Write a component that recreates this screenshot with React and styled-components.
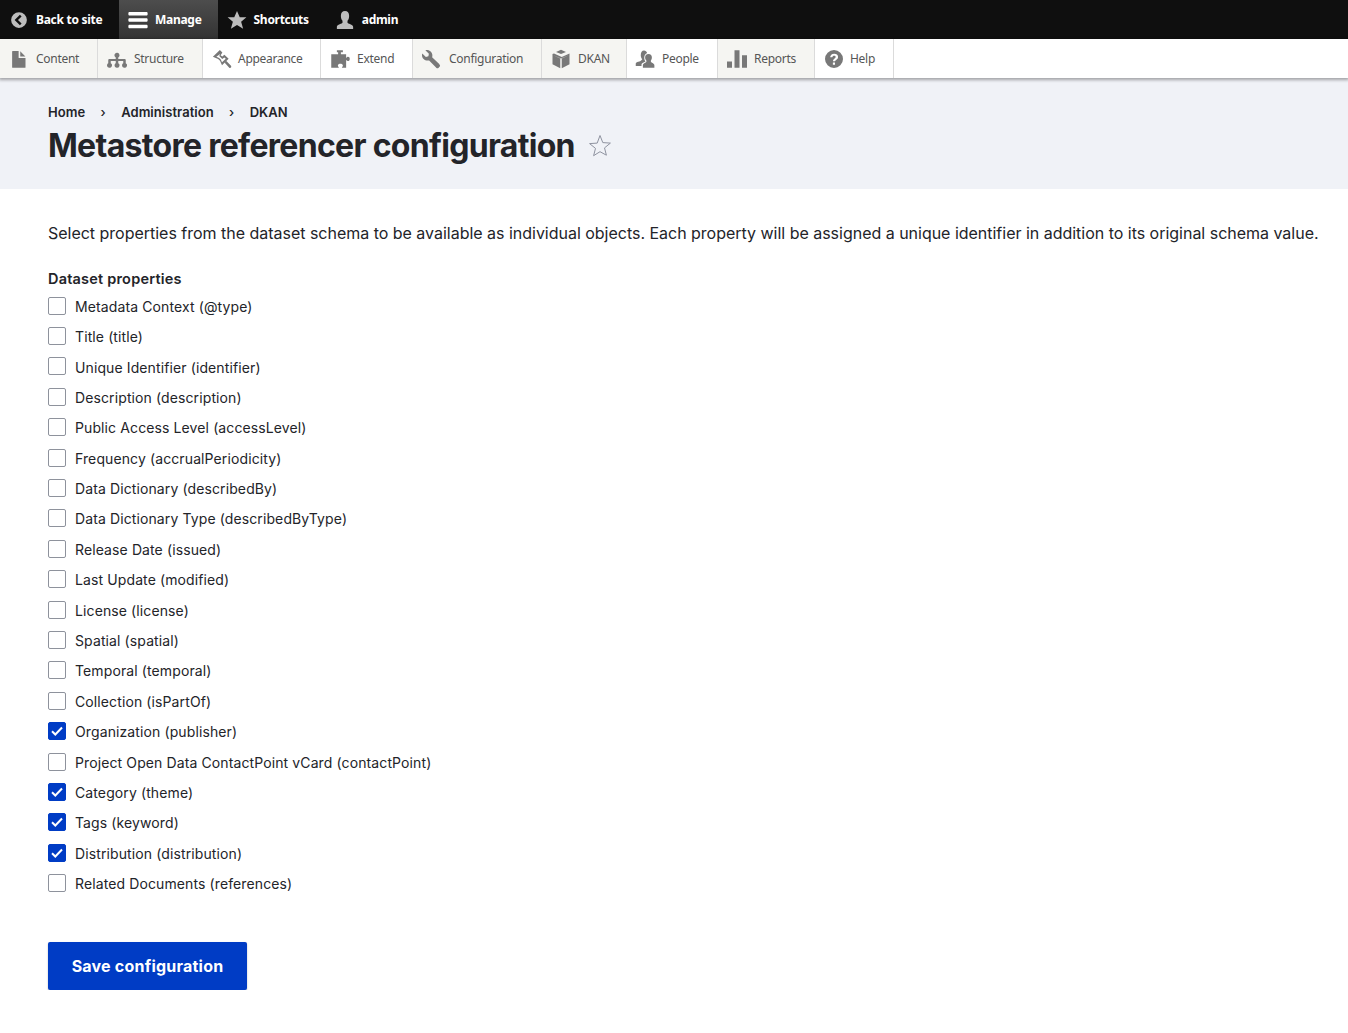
import React from 'react';
import styled, { createGlobalStyle } from 'styled-components';

const GlobalStyle = createGlobalStyle`
  * { box-sizing: border-box; }
  html, body { margin: 0; padding: 0; background: #fff; }
  body { font-family: Inter, "Liberation Sans", sans-serif; color: #232429; }
`;

const icons = {
  back: <path d="M8 1a7 7 0 1 0 0 14A7 7 0 0 0 8 1zm2.300 10.200-1.500 1.500L4.100 8l4.700-4.700 1.500 1.500L7.100 8l3.200 3.200z" />,
  menu: <path d="M1.300 1.500h13.400c.6 0 1 .4 1 1v.8c0 .6-.4 1-1 1H1.300c-.6 0-1-.4-1-1v-.8c0-.6.4-1 1-1zm0 5.100h13.400c.6 0 1 .4 1 1v.8c0 .6-.4 1-1 1H1.300c-.6 0-1-.4-1-1v-.8c0-.6.4-1 1-1zm0 5.100h13.400c.6 0 1 .4 1 1v.8c0 .6-.4 1-1 1H1.300c-.6 0-1-.4-1-1v-.8c0-.6.4-1 1-1z" />,
  star: <path d="M8 .8l2.200 5h5.300l-4.200 3.600 1.600 5.600L8 12l-4.900 3 1.600-5.600L.5 5.800h5.300z" />,
  user: <path d="M6 8.600C5 7.600 4.700 6.200 4.700 4.600 4.700 2.300 5.900.8 8 .8s3.300 1.500 3.300 3.800c0 1.600-.3 3-1.300 4v1.600c0 .7 4.500 1.500 4.500 3.200v1.800h-13v-1.800c0-1.700 4.500-2.500 4.500-3.200z" />,
  file: <path d="M13 7.200H8.200a.5.5 0 0 1-.5-.5V1.500H3a.5.500 0 0 0-.5.500v12.500a.5.500 0 0 0 .5.5h9.700a.5.500 0 0 0 .5-.5V7.200zM9 5.900h4.100L9 1.700z" />,
  structure: <path d="M15 11.300V9c0-.6-.4-1-1-1H9V6.700c.6-.3 1-1 1-1.700a2 2 0 1 0-3 1.700V8H2c-.6 0-1 .4-1 1v2.300c-.6.3-1 1-1 1.700a2 2 0 1 0 3-1.700V9.500h4v1.800c-.6.3-1 1-1 1.700a2 2 0 1 0 3-1.700V9.500h4v1.800c-.6.3-1 1-1 1.700a2 2 0 1 0 3-1.700z" />,
  brush: <path d="M6.300.8.700 6.200l4.200 1.700 1.500 1.500L8 13 13.300 7.800 9.900 4.500 8.200 6 6.900 4.900 8.300 2.800zM6.500 3.900l-3 2.300 2.200.9 1.300 1.300L8 10.600l3-2.800-1.100-1.100L8.200 8 5.800 5.500zM11.500 9.600 10.200 11l3.600 3.900c.4.4 1 .3 1.400-.1.3-.4.3-1 0-1.400z" fillRule="evenodd" />,
  puzzle: <path d="M5.500 1h4.800v1.600H8.700v1.600h4.200v3.100c.4-.7.9-1.100 1.500-1.100.9 0 1.400.7 1.400 1.700s-.5 1.700-1.400 1.700c-.6 0-1.100-.4-1.500-1.100V15H9.500c0-.7.8-1 .8-1.800 0-.9-1-1.400-2-1.400s-2 .5-2 1.400c0 .8.800 1.100.8 1.800H1V4.200h5.500V2.600h-1z" />,
  wrench: <path d="M15 12.300 8.900 6.600c.5-1.500.2-3.300-1-4.500C6.700.9 5 .5 3.500 1l2.800 2.800-.4 2-2 .5L1 3.500c-.5 1.500-.1 3.300 1.100 4.500 1.200 1.200 2.900 1.500 4.400 1.100l5.900 6c.4.4 1.100.4 1.500 0l1.100-1.200c.4-.4.4-1.200-.5-1.600z" />,
  box: <path d="M8 .6 12 2.300 8 4 4 2.300zM14.800 3.600 8.600 6.400 2.400 3.600 1.200 4v8.200l6.200 3.200V7.500L1.900 4.900l6.100 2.700 6.100-2.700-5.500 2.600v7.900l6.200-3.200V4z" />,
  people: <path d="M5.800 8.200C5.100 7.500 4.600 6.300 4.600 5c0-2.200 1-3.800 2.600-3.800 1.200 0 2.100.8 2.500 2C8.300 3.700 7.400 5 7.400 6.900c0 1 .3 2.200 1 3-.6.6-3.200 1-3.200 2.400v1.200H.6v-1.800c0-1.500 4-1.700 4.300-2.500zM12.700 10.200c0 .7 2.800 1 2.800 2.800v2H6.300v-2c0-1.800 2.800-2.100 2.800-2.800v-1c-.6-.6-1-1.400-1-2.400 0-1.700.9-2.800 2.700-2.800s2.700 1.100 2.700 2.800c0 1-.4 1.800-.8 2.400z" />,
  bars: <path d="M0 10h4v5H0zM6 1h4v14H6zM12 5h4v10h-4z" />,
  help: <path d="M8 0a8 8 0 1 0 0 16A8 8 0 0 0 8 0zm.9 13H7V11.200h1.900zm2.400-5.500c-.5.6-1.300 1-1.700 1.500-.3.3-.6.7-.7 1.100H7.100c0-1 .3-1.600 1-2.200.5-.5 1.400-.9 1.400-1.700 0-.6-.6-1.100-1.400-1.100-.9 0-1.500.6-1.600 1.400H4.600C4.700 4.600 6 3.300 8.200 3.300c2 0 3.400 1 3.400 2.600 0 .6-.1 1.100-.3 1.600z" />,
};

const Toolbar = styled.div`
  height: 39px;
  background: #0f0f0f;
  display: flex;
  font-family: "Noto Sans", sans-serif;
  font-weight: 700;
  font-size: 12px;
  letter-spacing: -0.28px;
  color: #fff;
`;

const BarItem = styled.a`
  display: flex;
  align-items: center;
  gap: ${(p) => p.$gap || 8}px;
  padding: ${(p) => p.$pad || '0 17px 0 9px'};
  background: ${(p) => (p.$active ? 'linear-gradient(#4d4d4d, #333)' : 'transparent')};
`;

const Icon = styled.svg`
  width: ${(p) => p.$size || 20}px;
  height: ${(p) => p.$size || 20}px;
  flex: none;
  fill: ${(p) => p.$fill || '#787878'};
`;

const Tray = styled.nav`
  height: 39px;
  display: flex;
  background: #fff;
  box-shadow: 0 1px 3px 1px rgba(0, 0, 0, 0.33);
  position: relative;
  font-family: "Noto Sans", sans-serif;
  font-size: 12px;
  letter-spacing: -0.28px;
  color: #565656;
`;

const TrayItem = styled.a`
  width: ${(p) => p.$width}px;
  display: flex;
  align-items: center;
  gap: ${(p) => p.$gap}px;
  padding-left: ${(p) => p.$pad}px;
  border-right: 1px solid #dbdbdb;
  background: ${(p) => (p.$tint ? '#f5f5f2' : '#fff')};
`;

const PageHeader = styled.header`
  height: 111px;
  background: #f0f2f7;
  padding: 27px 48px 0;
`;

const Breadcrumb = styled.ol`
  display: flex;
  align-items: center;
  margin: 0;
  padding: 0;
  list-style: none;
  height: 14px;
  font-size: 13px;
  font-weight: 600;
  letter-spacing: 0.04px;
  color: #232429;
`;

const Crumb = styled.li`
  & + &::before {
    content: '›';
    display: inline-block;
    width: 36px;
    text-align: center;
    font-weight: 500;
  }
`;

const TitleRow = styled.div`
  display: flex;
  align-items: center;
  gap: 13px;
  margin-top: 7px;
`;

const Title = styled.h1`
  margin: 0;
  font-size: 32px;
  line-height: 40px;
  font-weight: 700;
  letter-spacing: -0.7px;
  color: #232429;
`;

const Main = styled.main`
  padding: 32px 0 0 48px;
`;

const Intro = styled.p`
  margin: 0;
  font-size: 16px;
  line-height: 24px;
  letter-spacing: -0.017px;
  white-space: nowrap;
`;

const Legend = styled.div`
  margin-top: 25px;
  font-size: 14.5px;
  line-height: 18px;
  font-weight: 600;
  letter-spacing: 0.2px;
`;

const Options = styled.div`
  margin-top: 2.5px;
  display: flex;
  flex-direction: column;
`;

const Option = styled.label`
  height: 30.4px;
  display: flex;
  align-items: center;
  gap: 9px;
  font-size: 14px;
  letter-spacing: 0.11px;
`;

const OptionText = styled.span`
  padding-top: 1.1px;
`;

const Box = styled.span`
  width: 18px;
  height: 18px;
  border-radius: 2px;
  border: 1px solid ${(p) => (p.$on ? '#003cc5' : '#8e929c')};
  background: ${(p) => (p.$on ? '#003cc5' : '#fff')};
  display: flex;
  align-items: center;
  justify-content: center;
`;

const SaveButton = styled.button`
  display: block;
  margin-top: 44px;
  width: 199px;
  height: 48px;
  border: 0;
  border-radius: 2px;
  background: #003cc5;
  color: #fff;
  font-family: inherit;
  font-size: 16px;
  font-weight: 700;
  letter-spacing: 0.22px;
  box-shadow: 0 1px 2px rgba(0, 0, 0, 0.25);
`;

const barItems = [
  { label: 'Back to site', icon: 'back', fill: '#bdbdbd', pad: '0 16.6px 0 10px', size: 18, gap: 8 },
  { label: 'Manage', icon: 'menu', fill: '#fff', pad: '0 16px 0 9px', active: true, gap: 7 },
  { label: 'Shortcuts', icon: 'star', fill: '#bdbdbd', gap: 7 },
  { label: 'admin', icon: 'user', fill: '#bdbdbd', gap: 7 },
];

const trayItems = [
  { label: 'Content', icon: 'file', width: 98, tint: true, pad: 9, gap: 7 },
  { label: 'Structure', icon: 'structure', width: 105, tint: true, pad: 9, gap: 7 },
  { label: 'Appearance', icon: 'brush', width: 118, pad: 9, gap: 6 },
  { label: 'Extend', icon: 'puzzle', width: 92, pad: 9, gap: 7 },
  { label: 'Configuration', icon: 'wrench', width: 129, tint: true, pad: 8, gap: 8 },
  { label: 'DKAN', icon: 'box', width: 85, tint: true, pad: 9, gap: 7 },
  { label: 'People', icon: 'people', width: 91, pad: 8, gap: 7 },
  { label: 'Reports', icon: 'bars', width: 97, tint: true, pad: 9, gap: 7 },
  { label: 'Help', icon: 'help', width: 79, pad: 10, gap: 7, size: 18 },
];

const properties = [
  ['Metadata Context (@type)'],
  ['Title (title)'],
  ['Unique Identifier (identifier)'],
  ['Description (description)'],
  ['Public Access Level (accessLevel)'],
  ['Frequency (accrualPeriodicity)'],
  ['Data Dictionary (describedBy)'],
  ['Data Dictionary Type (describedByType)'],
  ['Release Date (issued)'],
  ['Last Update (modified)'],
  ['License (license)'],
  ['Spatial (spatial)'],
  ['Temporal (temporal)'],
  ['Collection (isPartOf)'],
  ['Organization (publisher)', true],
  ['Project Open Data ContactPoint vCard (contactPoint)'],
  ['Category (theme)', true],
  ['Tags (keyword)', true],
  ['Distribution (distribution)', true],
  ['Related Documents (references)'],
];

const App = () => (
  <>
    <GlobalStyle />
    <Toolbar>
      {barItems.map((item) => (
        <BarItem key={item.label} $pad={item.pad} $active={item.active} $gap={item.gap}>
          <Icon viewBox="0 0 16 16" $fill={item.fill} $size={item.size}>{icons[item.icon]}</Icon>
          {item.label}
        </BarItem>
      ))}
    </Toolbar>
    <Tray>
      {trayItems.map((item) => (
        <TrayItem key={item.label} $width={item.width} $tint={item.tint} $pad={item.pad} $gap={item.gap}>
          <Icon viewBox="0 0 16 16" $size={item.size}>{icons[item.icon]}</Icon>
          {item.label}
        </TrayItem>
      ))}
    </Tray>
    <PageHeader>
      <Breadcrumb>
        <Crumb>Home</Crumb>
        <Crumb>Administration</Crumb>
        <Crumb>DKAN</Crumb>
      </Breadcrumb>
      <TitleRow>
        <Title>Metastore referencer configuration</Title>
        <Icon viewBox="0 0 24 24" $size={24} $fill="none">
          <path d="M12 1.500l2.800 7.100 7.600.5-5.900 4.800 1.900 7.300L12 17.700l-6.400 4 1.900-7.300-5.900-4.800 7.600-.5z" stroke="#8f93a0" strokeWidth="1" />
        </Icon>
      </TitleRow>
    </PageHeader>
    <Main>
      <Intro>Select properties from the dataset schema to be available as individual objects. Each property will be assigned a unique identifier in addition to its original schema value.</Intro>
      <Legend>Dataset properties</Legend>
      <Options>
        {properties.map(([label, on]) => (
          <Option key={label}>
            <Box $on={on}>
              {on && (
                <svg width="12" height="10" viewBox="0 0 12 10">
                  <path d="M1 5.200 4.300 8.500 11 1.500" fill="none" stroke="#fff" strokeWidth="2" />
                </svg>
              )}
            </Box>
            <OptionText>{label}</OptionText>
          </Option>
        ))}
      </Options>
      <SaveButton>Save configuration</SaveButton>
    </Main>
  </>
);

export default App;
